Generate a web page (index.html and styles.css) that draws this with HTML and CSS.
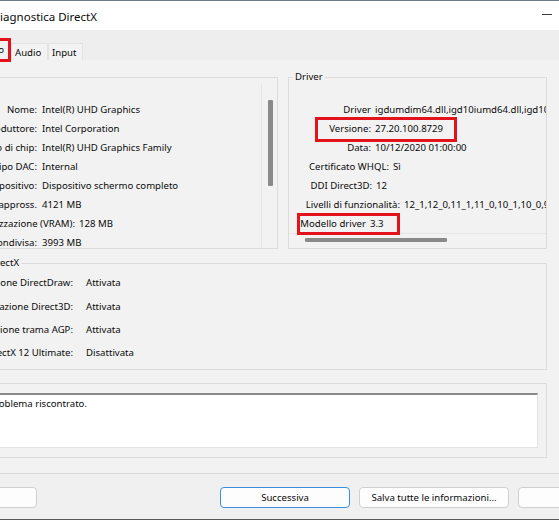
FILE: index.html
```html
<!DOCTYPE html>
<html lang="it">
<head>
<meta charset="utf-8">
<title>Strumento di diagnostica DirectX</title>
<link rel="stylesheet" href="styles.css">
</head>
<body>
<div class="window">
  <div class="titlebar">
    <div class="title"><span>Strumento di diagnostica DirectX</span></div>
    <span class="minimize"></span>
  </div>

  <div class="tabstrip">
    <div class="tab tab--active"><span>Schermo</span></div>
    <div class="tab tab--audio">Audio</div>
    <div class="tab tab--input">Input</div>
  </div>

  <div class="tab-page">
    <div class="top-groups">
      <div class="group group--device">
        <div class="group-label">Dispositivo</div>
        <div class="device-body">
          <div class="device-list">
            <div class="info-row"><span class="info-label">Nome:</span><span>Intel(R) UHD Graphics</span></div>
            <div class="info-row"><span class="info-label">Produttore:</span><span>Intel Corporation</span></div>
            <div class="info-row"><span class="info-label">Tipo di chip:</span><span>Intel(R) UHD Graphics Family</span></div>
            <div class="info-row"><span class="info-label">Tipo DAC:</span><span>Internal</span></div>
            <div class="info-row"><span class="info-label">Tipo dispositivo:</span><span>Dispositivo schermo completo</span></div>
            <div class="info-row"><span class="info-label">Memoria totale appross.</span><span>4121 MB</span></div>
            <div class="info-row info-row--wide"><span class="info-label">Memoria di visualizzazione (VRAM):</span><span>128 MB</span></div>
            <div class="info-row"><span class="info-label">Memoria condivisa:</span><span>3993 MB</span></div>
          </div>
          <div class="vscroll"><div class="vscroll-thumb"></div></div>
        </div>
      </div>

      <div class="group group--driver">
        <div class="group-label group-label--driver">Driver</div>
        <div class="driver-body">
          <div class="driver-rows">
            <div class="drv-row"><span class="drv-label drv-label--main">Driver</span><span>igdumdim64.dll,igd10iumd64.dll,igd10iumd64.dll,igd12umd64.dll</span></div>
            <div class="drv-row"><span class="drv-label drv-label--main">Versione:</span><span>27.20.100.8729</span></div>
            <div class="drv-row"><span class="drv-label drv-label--main">Data:</span><span>10/12/2020 01:00:00</span></div>
            <div class="drv-row"><span class="drv-label drv-label--whql">Certificato WHQL:</span><span>Sì</span></div>
            <div class="drv-row"><span class="drv-label drv-label--ddi">DDI Direct3D:</span><span>12</span></div>
            <div class="drv-row"><span class="drv-label drv-label--levels">Livelli di funzionalità:</span><span>12_1,12_0,11_1,11_0,10_1,10_0,9_3,9_2,9_1</span></div>
            <div class="drv-row"><span class="drv-label drv-label--model">Modello driver</span><span>3.3</span></div>
          </div>
          <div class="hscroll"><div class="hscroll-thumb"></div></div>
        </div>
        <div class="callout callout--version"></div>
        <div class="callout callout--model"></div>
      </div>
    </div>

    <div class="group group--dx">
      <div class="group-label group-label--clip">Funzionalità DirectX</div>
      <div class="dx-rows">
        <div class="dx-row"><span class="dx-label">Accelerazione DirectDraw:</span><span>Attivata</span></div>
        <div class="dx-row"><span class="dx-label">Accelerazione Direct3D:</span><span>Attivata</span></div>
        <div class="dx-row"><span class="dx-label">Accelerazione trama AGP:</span><span>Attivata</span></div>
        <div class="dx-row"><span class="dx-label">DirectX 12 Ultimate:</span><span>Disattivata</span></div>
      </div>
    </div>

    <div class="group group--notes">
      <div class="group-label">Note</div>
      <div class="notes-box">
        <div class="notes-text">Nessun problema riscontrato.</div>
      </div>
    </div>
  </div>

  <div class="footer">
    <button class="btn">Guida</button>
    <span class="spacer"></span>
    <button class="btn btn--default">Successiva</button>
    <button class="btn btn--wide">Salva tutte le informazioni...</button>
    <button class="btn">Esci</button>
  </div>
</div>
</body>
</html>
```

FILE: styles.css
```css
* { box-sizing: border-box; }

html, body {
  margin: 0;
  padding: 0;
}

body {
  width: 559px;
  height: 520px;
  overflow: hidden;
  background: #f0f0f0;
  font-family: "Noto Sans", "Open Sans", sans-serif;
  font-size: 9.6px;
  color: #0a0a0a;
}

.window {
  height: 520px;
  display: flex;
  flex-direction: column;
  border-top: 1px solid #6e7c85;
  border-bottom: 1px solid #575757;
}

/* title bar */
.titlebar {
  height: 29px;
  flex: none;
  background: #ffffff;
  display: flex;
  align-items: center;
  justify-content: space-between;
}

.title {
  width: 97px;
  display: flex;
  justify-content: flex-end;
  white-space: nowrap;
  font-size: 11.5px;
  margin-top: 1px;
}

.minimize {
  width: 10px;
  height: 1px;
  background: #3a3a3a;
  align-self: flex-start;
  margin: 13px 7px 0 0;
}

/* tabs */
.tabstrip {
  height: 30px;
  flex: none;
  background: #eeeeee;
  display: flex;
  align-items: flex-end;
}

.tab {
  height: 17px;
  display: flex;
  align-items: center;
  padding-left: 3px;
  white-space: nowrap;
  background: #f3f3f3;
  border: 1px solid #e2e2e2;
  border-bottom: none;
}

.tab--audio { width: 37px; }
.tab--input { width: 35px; }

.tab--active {
  position: relative;
  z-index: 1;
  margin-left: -60px;
  width: 71px;
  height: 24px;
  margin-bottom: -2px;
  justify-content: flex-end;
  padding: 0 4px 2px 0;
  border: 3px solid #e3131b;
  background: #f2f2f2;
}

/* tab page */
.tab-page {
  height: 414px;
  flex: none;
  margin-left: -150px;
  padding: 17px 12px 0 0;
  background: #f2f2f2;
  border-bottom: 1px solid #dadada;
  display: flex;
  flex-direction: column;
}

.group {
  border: 1px solid #dcdcdc;
  display: flex;
  flex-direction: column;
  min-width: 0;
}

.group-label {
  align-self: flex-start;
  height: 14px;
  line-height: 14px;
  margin: -8px 0 0 6px;
  padding: 0 2px;
  background: #f2f2f2;
  white-space: nowrap;
}

.group-label--driver { margin-left: 4px; }

.group-label--clip {
  width: 164px;
  text-align: right;
}

.top-groups {
  height: 172px;
  flex: none;
  display: flex;
  gap: 10px;
}

/* device group */
.group--device { width: 428px; flex: none; }

.device-body {
  flex: 1;
  min-height: 0;
  display: flex;
}

.device-list {
  flex: 1;
  min-width: 0;
  overflow: hidden;
  padding-top: 16px;
}

.info-row {
  height: 19px;
  display: flex;
  align-items: center;
  gap: 5px;
  white-space: nowrap;
}

.info-label {
  width: 186px;
  flex: none;
  text-align: right;
}

.info-row--wide { gap: 4px; }
.info-row--wide .info-label { width: 224px; }

.vscroll {
  width: 16px;
  flex: none;
  border-left: 1px solid #e3e3e3;
  padding: 16px 0 0 6px;
}

.vscroll-thumb {
  width: 5px;
  height: 86px;
  background: #8a8a8a;
  border-radius: 1px;
}

/* driver group */
.group--driver {
  flex: 1;
  position: relative;
}

.driver-body {
  flex: 1;
  min-height: 0;
  min-width: 0;
  overflow: hidden;
  display: flex;
  flex-direction: column;
}

.driver-rows { padding-top: 16px; }

.drv-row {
  height: 19px;
  display: flex;
  align-items: center;
  gap: 4px;
  white-space: nowrap;
}

.drv-label {
  flex: none;
  text-align: right;
}

.drv-label--main { width: 82px; }
.drv-label--whql { width: 100px; }
.drv-label--ddi { width: 83px; }
.drv-label--levels { width: 111px; }
.drv-label--model { width: 77px; }

.hscroll {
  height: 14px;
  flex: none;
  border-top: 1px solid #e6e6e6;
  padding: 4px 0 0 16px;
}

.hscroll-thumb {
  width: 142px;
  height: 4px;
  background: #8a8a8a;
  border-radius: 1px;
}

.callout {
  position: absolute;
  border: 3px solid #e3131b;
}

.callout--version {
  left: 26px;
  top: 39px;
  width: 142px;
  height: 25px;
}

.callout--model {
  left: 8px;
  top: 135px;
  width: 103px;
  height: 22px;
}

/* DirectX features */
.group--dx {
  height: 107px;
  flex: none;
  margin-top: 14px;
}

.dx-rows { padding-top: 1px; }

.dx-row {
  height: 23.4px;
  display: flex;
  align-items: center;
  gap: 13px;
  white-space: nowrap;
}

.dx-label {
  width: 222px;
  flex: none;
  text-align: right;
}

/* notes */
.group--notes {
  height: 75px;
  flex: none;
  margin-top: 13px;
}

.notes-box {
  height: 55px;
  margin: 3px 8px 0 8px;
  background: #ffffff;
  border: 1px solid #e3e3e3;
  border-top: 2px solid #8a8a8a;
}

.notes-text {
  width: 227px;
  text-align: right;
  padding-top: 2px;
  line-height: 14px;
  white-space: nowrap;
}

/* footer buttons */
.footer {
  height: 45px;
  flex: none;
  display: flex;
  align-items: flex-start;
  gap: 9px;
  margin: 0 -100px 0 -93px;
  padding: 13px 11px 0 0;
}

.spacer { flex: 1; }

.btn {
  width: 130px;
  height: 21px;
  flex: none;
  padding: 0;
  font: inherit;
  color: inherit;
  background: #fdfdfd;
  border: 1px solid #d0d0d0;
  border-radius: 4px;
}

.btn--wide { width: 150px; }

.btn--default {
  border-color: #3b8fdf;
}
```
